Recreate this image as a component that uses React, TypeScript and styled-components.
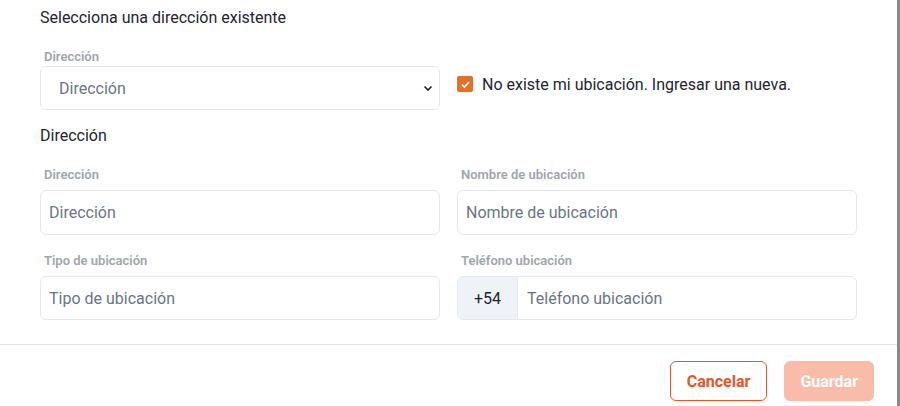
import React from 'react';
import styled, { createGlobalStyle } from 'styled-components';

const GlobalStyle = createGlobalStyle`
  html, body {
    margin: 0;
    padding: 0;
    background: #8a8a8a;
    font-family: Roboto, "Liberation Sans", Arial, sans-serif;
  }
  * { box-sizing: border-box; }
`;

const Modal = styled.div`
  width: 897px;
  height: 406px;
  background: #ffffff;
  display: flex;
  flex-direction: column;
  overflow: hidden;
`;

const Body = styled.div`
  padding: 8px 40px 0 40px;
  display: flex;
  flex-direction: column;
`;

const SectionTitle = styled.h3<{ mt?: number }>`
  margin: ${p => p.mt ?? 0}px 0 0 0;
  font-size: 16px;
  line-height: 20px;
  font-weight: 400;
  color: #1f2430;
`;

const Grid = styled.div<{ mt?: number }>`
  display: grid;
  grid-template-columns: 400px 400px;
  column-gap: 17px;
  margin-top: ${p => p.mt ?? 0}px;
`;

const Field = styled.div`
  display: flex;
  flex-direction: column;
`;

const Label = styled.label<{ gap?: number }>`
  font-size: 13px;
  line-height: 16px;
  font-weight: 600;
  color: #a1a5ad;
  padding-left: 4px;
  margin-bottom: ${p => p.gap ?? 7}px;
`;

const Box = styled.div<{ h?: number }>`
  height: ${p => p.h ?? 44}px;
  border: 1px solid #e3e7ee;
  border-radius: 6px;
  display: flex;
  align-items: center;
  background: #fff;
  overflow: hidden;
`;

const Input = styled.input<{ pad?: number }>`
  flex: 1;
  height: 100%;
  border: none;
  outline: none;
  padding: 0 0 0 ${p => p.pad ?? 8}px;
  font-family: inherit;
  font-size: 16px;
  color: #1f2430;
  background: transparent;
  &::placeholder {
    color: #6b7588;
  }
`;

const SelectText = styled.span`
  flex: 1;
  padding-left: 18px;
  font-size: 16px;
  color: #6b7588;
`;

const Chevron = styled.svg`
  width: 12px;
  height: 12px;
  margin-right: 5px;
`;

const Prefix = styled.span`
  width: 60px;
  height: 100%;
  display: flex;
  align-items: center;
  justify-content: center;
  background: #eff3f8;
  border-right: 1px solid #e3e7ee;
  font-size: 16px;
  color: #1f2430;
`;

const CheckRow = styled.div`
  align-self: end;
  height: 44px;
  padding-bottom: 8px;
  display: flex;
  align-items: center;
  gap: 9px;
  font-size: 16px;
  color: #1f2430;
`;

const CheckBox = styled.span`
  width: 16px;
  height: 16px;
  border-radius: 2px;
  background: #e56f27;
  display: flex;
  align-items: center;
  justify-content: center;
`;

const Divider = styled.hr`
  margin: 24px 0 0 0;
  border: none;
  border-top: 1px solid #e4e4e4;
`;

const Footer = styled.div`
  display: flex;
  justify-content: flex-end;
  gap: 17px;
  padding: 16px 23px 0 0;
`;

const Button = styled.button<{ primary?: boolean }>`
  height: 40px;
  padding: 0 ${p => (p.primary ? 15 : 16)}px;
  border-radius: 6px;
  font-family: inherit;
  font-size: 16px;
  font-weight: 700;
  border: 1px solid ${p => (p.primary ? '#f8bca8' : '#e8552a')};
  background: ${p => (p.primary ? '#f8bca8' : '#ffffff')};
  color: ${p => (p.primary ? '#ffffff' : '#e8552a')};
`;

export default function App() {
  return (
    <>
      <GlobalStyle />
      <Modal>
        <Body>
          <SectionTitle>Selecciona una dirección existente</SectionTitle>
          <Grid mt={21}>
            <Field>
              <Label gap={1}>Dirección</Label>
              <Box>
                <SelectText>Dirección</SelectText>
                <Chevron viewBox="0 0 12 12">
                  <path d="M2.5 4.5 L6 8 L9.5 4.5" fill="none" stroke="#1f2430" strokeWidth="1.6" />
                </Chevron>
              </Box>
            </Field>
            <CheckRow>
              <CheckBox>
                <svg width="11" height="11" viewBox="0 0 12 12">
                  <path d="M2.2 6.2 L4.8 8.8 L9.8 3.4" fill="none" stroke="#fff" strokeWidth="1.8" />
                </svg>
              </CheckBox>
              No existe mi ubicación. Ingresar una nueva.
            </CheckRow>
          </Grid>
          <SectionTitle mt={16}>Dirección</SectionTitle>
          <Grid mt={21}>
            <Field>
              <Label>Dirección</Label>
              <Box h={45}>
                <Input placeholder="Dirección" />
              </Box>
            </Field>
            <Field>
              <Label>Nombre de ubicación</Label>
              <Box h={45}>
                <Input placeholder="Nombre de ubicación" />
              </Box>
            </Field>
          </Grid>
          <Grid mt={18}>
            <Field>
              <Label>Tipo de ubicación</Label>
              <Box>
                <Input placeholder="Tipo de ubicación" />
              </Box>
            </Field>
            <Field>
              <Label>Teléfono ubicación</Label>
              <Box>
                <Prefix>+54</Prefix>
                <Input pad={9} placeholder="Teléfono ubicación" />
              </Box>
            </Field>
          </Grid>
        </Body>
        <Divider />
        <Footer>
          <Button>Cancelar</Button>
          <Button primary>Guardar</Button>
        </Footer>
      </Modal>
    </>
  );
}
